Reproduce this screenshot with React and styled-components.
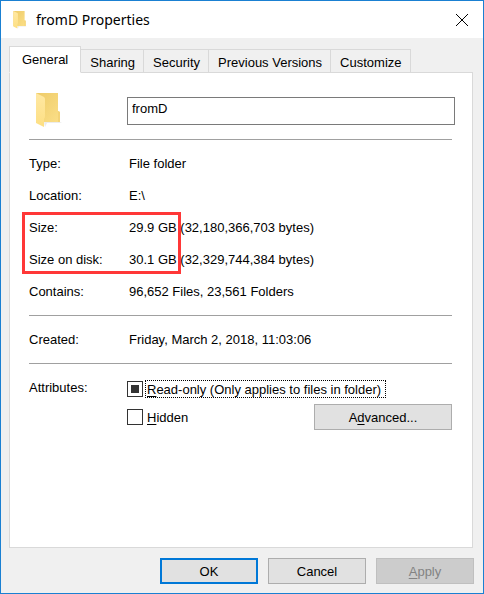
import { useEffect, useRef, useState } from "react";
import styled, { createGlobalStyle } from "styled-components";

const GlobalStyle = createGlobalStyle`
  *, *::before, *::after {
    box-sizing: border-box;
  }

  body {
    margin: 0;
    background: #f0f0f0;
    color: #000;
    font-family: "Liberation Sans", Arial, sans-serif;
    font-size: 13px;
    line-height: 16px;
  }

  button, input {
    font: inherit;
    color: inherit;
  }
`;

const Dialog = styled.main`
  display: flex;
  flex-direction: column;
  min-height: 100vh;
  background: #f0f0f0;
  border: 1px solid #1a80d2;
`;

const TitleBar = styled.header`
  display: flex;
  align-items: center;
  height: 37px;
  padding: 0 14px 0 12px;
  background: #fff;

  h1 {
    flex: 1;
    margin: 0 0 0 9px;
    font-family: "Noto Sans", "Open Sans", sans-serif;
    font-size: 14px;
    font-weight: 400;
    line-height: 20px;
  }
`;

const CloseButton = styled.button`
  display: flex;
  padding: 0;
  border: 0;
  background: none;
`;

const TabList = styled.div`
  display: flex;
  align-items: flex-end;
  padding: 8px 8px 0;
`;

const Tab = styled.button`
  position: relative;
  height: ${({ $active }) => ($active ? 27 : 24)}px;
  margin-bottom: -1px;
  padding: ${({ $active }) => ($active ? "0 12px" : "3px 8px 0 9px")};
  border: 1px solid #d9d9d9;
  border-left-width: ${({ $active }) => ($active ? 1 : 0)}px;
  border-bottom-color: ${({ $active }) => ($active ? "#fff" : "#d9d9d9")};
  background: ${({ $active }) => ($active ? "#fff" : "#f0f0f0")};
  white-space: nowrap;
`;

const Panel = styled.section`
  flex: 1;
  margin: 0 10px 0 8px;
  padding: 24px 20px 20px 19px;
  border: 1px solid #d9d9d9;
  background: #fff;
`;

const NameRow = styled.div`
  display: grid;
  grid-template-columns: 98px 1fr;
  height: 42px;
  margin-right: -3px;

  svg {
    margin: -4px 0 0 7px;
  }
`;

const NameInput = styled.input`
  width: 100%;
  height: 28px;
  padding: 0 4px 6px;
  border: 1px solid #7a7a7a;
  border-radius: 0;
  background: #fff;
  outline: none;
`;

const Details = styled.dl`
  margin: 0;
  padding: 7px 0 8px;
  border-top: 1px solid #a0a0a0;
`;

const DetailRow = styled.div`
  display: grid;
  grid-template-columns: 100px 1fr;
  align-items: center;
  height: 32px;
  padding-top: 2px;

  dd {
    margin: 0;
  }
`;

const Marked = styled.div`
  position: relative;

  &::after {
    content: "";
    position: absolute;
    top: 1px;
    left: -7px;
    width: 159px;
    height: 62px;
    border: 3px solid #ff3737;
    pointer-events: none;
  }
`;

const Attributes = styled.div`
  display: grid;
  grid-template-columns: 98px 1fr;
  padding: 11px 0;
  border-top: 1px solid #a0a0a0;
`;

const AttributesTitle = styled.span`
  padding-top: 5px;
`;

const CheckRow = styled.div`
  display: flex;
  align-items: center;
  height: 28px;

  button {
    margin-left: auto;
  }
`;

const Checkbox = styled.input`
  appearance: none;
  display: grid;
  place-content: center;
  width: 16px;
  height: 16px;
  margin: 0 2px 0 0;
  border: 1px solid #333;
  background: #fff;
  outline: none;

  &:indeterminate::before, &:checked::before {
    content: "";
    width: 8px;
    height: 8px;
    background: #333;
  }
`;

const CheckLabel = styled.label`
  height: 18px;
  padding: 1px 4px 0 1px;
  border: 1px dotted ${({ $focused }) => ($focused ? "#000" : "transparent")};
  white-space: nowrap;
`;

const Button = styled.button`
  width: ${({ $wide }) => ($wide ? 138 : 98)}px;
  height: 26px;
  padding: 2px 0 0;
  border: ${({ $primary }) => ($primary ? "2px solid #0078d7" : "1px solid #adadad")};
  background: #e1e1e1;

  &:disabled {
    border-color: #bfbfbf;
    background: #ccc;
    color: #838383;
  }
`;

const Footer = styled.footer`
  display: flex;
  justify-content: flex-end;
  gap: 10px;
  padding: 10px 9px 9px;
`;

const Key = styled.u`
  text-underline-offset: 2px;
`;

const TABS = ["General", "Sharing", "Security", "Previous Versions", "Customize"];

function FolderIcon({ width, height }) {
  return (
    <svg width={width} height={height} viewBox="0 0 26 35" aria-hidden="true">
      <defs>
        <linearGradient id="folder-back" x1="0" y1="0" x2="1" y2="1">
          <stop offset="0" stopColor="#eecb68" />
          <stop offset="1" stopColor="#fbdf88" />
        </linearGradient>
        <linearGradient id="folder-front" x1="0" y1="0" x2="0" y2="1">
          <stop offset="0" stopColor="#ffe8a3" />
          <stop offset="1" stopColor="#fddf83" />
        </linearGradient>
      </defs>
      <path d="M8 29h18l-2 1H11l-2 4z" fill="#ececec" />
      <path d="M0 0h22v18l2 1v10H0z" fill="url(#folder-back)" />
      <path d="M22 18l2 1v10h-2z" fill="#f3d377" />
      <path d="M0 0l8 4q1 1 1 2v18l-1 2v8L0 30z" fill="url(#folder-front)" />
    </svg>
  );
}

function Detail({ label, children }) {
  return (
    <DetailRow>
      <dt>{label}</dt>
      <dd>{children}</dd>
    </DetailRow>
  );
}

export default function App() {
  const [tab, setTab] = useState("General");
  const [name, setName] = useState("fromD");
  const readOnlyRef = useRef(null);

  useEffect(() => {
    readOnlyRef.current.indeterminate = true;
  }, []);

  return (
    <>
      <GlobalStyle />
      <Dialog>
        <TitleBar>
          <FolderIcon width={14} height={18} />
          <h1>fromD Properties</h1>
          <CloseButton type="button" aria-label="Close">
            <svg width="14" height="14" viewBox="0 0 14 14" aria-hidden="true">
              <path d="M1 1l12 12M13 1L1 13" stroke="#000" strokeWidth="1" />
            </svg>
          </CloseButton>
        </TitleBar>

        <TabList role="tablist">
          {TABS.map((item) => (
            <Tab
              key={item}
              type="button"
              role="tab"
              aria-selected={item === tab}
              $active={item === tab}
              onClick={() => setTab(item)}
            >
              {item}
            </Tab>
          ))}
        </TabList>

        <Panel role="tabpanel" aria-label={tab}>
          <NameRow>
            <FolderIcon width={26} height={35} />
            <NameInput
              aria-label="Folder name"
              value={name}
              onChange={(e) => setName(e.target.value)}
            />
          </NameRow>

          <Details>
            <Detail label="Type:">File folder</Detail>
            <Detail label="Location:">E:\</Detail>
            <Marked>
              <Detail label="Size:">29.9 GB (32,180,366,703 bytes)</Detail>
              <Detail label="Size on disk:">30.1 GB (32,329,744,384 bytes)</Detail>
            </Marked>
            <Detail label="Contains:">96,652 Files, 23,561 Folders</Detail>
          </Details>

          <Details>
            <Detail label="Created:">Friday, March 2, 2018, 11:03:06</Detail>
          </Details>

          <Attributes role="group" aria-labelledby="attributes">
            <AttributesTitle id="attributes">Attributes:</AttributesTitle>
            <div>
              <CheckRow>
                <Checkbox type="checkbox" id="read-only" ref={readOnlyRef} />
                <CheckLabel htmlFor="read-only" $focused>
                  <Key>R</Key>ead-only (Only applies to files in folder)
                </CheckLabel>
              </CheckRow>
              <CheckRow>
                <Checkbox type="checkbox" id="hidden" />
                <CheckLabel htmlFor="hidden">
                  <Key>H</Key>idden
                </CheckLabel>
                <Button type="button" $wide>
                  A<Key>d</Key>vanced...
                </Button>
              </CheckRow>
            </div>
          </Attributes>
        </Panel>

        <Footer>
          <Button type="button" $primary>OK</Button>
          <Button type="button">Cancel</Button>
          <Button type="button" disabled>
            <Key>A</Key>pply
          </Button>
        </Footer>
      </Dialog>
    </>
  );
}
